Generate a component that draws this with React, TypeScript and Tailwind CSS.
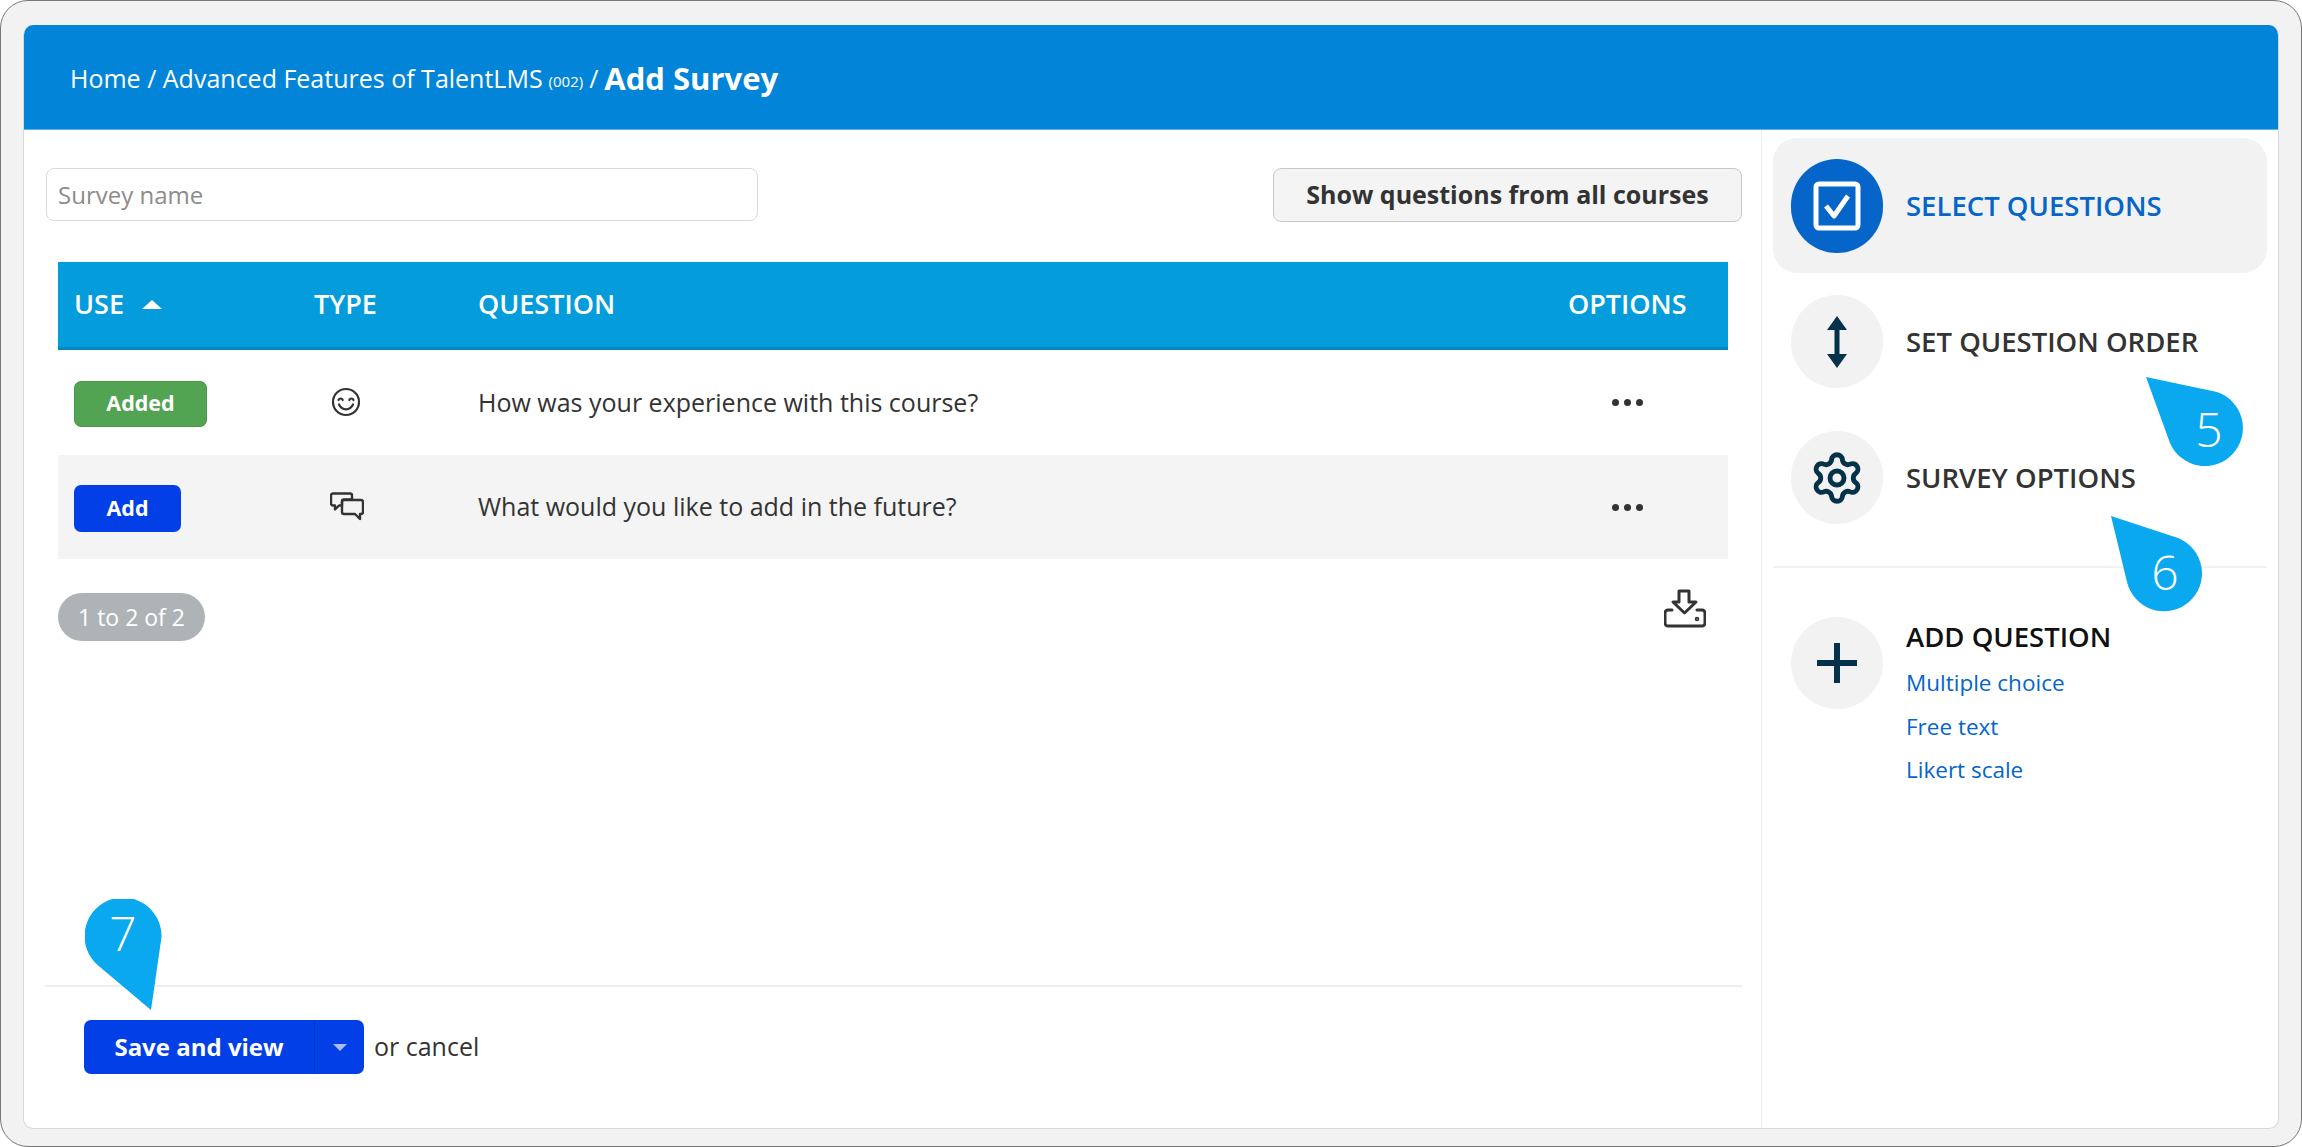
import { Settings } from 'lucide-react';

const openSans = { fontFamily: '"Open Sans", sans-serif' };

const rows = [
  { status: 'Added', icon: 'smile', question: 'How was your experience with this course?' },
  { status: 'Add', icon: 'chat', question: 'What would you like to add in the future?' },
];

function SmileIcon() {
  return (
    <svg width="30" height="30" viewBox="0 0 30 30" fill="none" stroke="#333" strokeWidth="2.2" strokeLinecap="round">
      <circle cx="15" cy="15" r="13" />
      <path d="M7.5 13c.8-2 3.400-2 4.200 0M18.300 13c.8-2 3.400-2 4.200 0" />
      <path d="M8 17.500c1.500 3.300 4 4.800 7 4.800s5.500-1.500 7-4.800" />
    </svg>
  );
}

function ChatIcon() {
  return (
    <svg width="34" height="30" viewBox="0 0 34 30" fill="none" stroke="#333" strokeWidth="2.4" strokeLinejoin="round">
      <path d="M3 1.500h17a2 2 0 0 1 2 2v4h-8a2 2 0 0 0-2 2v4H9l-4 4v-4H3a2 2 0 0 1-2-2v-8a2 2 0 0 1 2-2z" />
      <path d="M14 8h17a2 2 0 0 1 2 2v10a2 2 0 0 1-2 2h-1v5l-5-5H14a2 2 0 0 1-2-2V10a2 2 0 0 1 2-2z" />
    </svg>
  );
}

function DownloadIcon() {
  return (
    <svg width="42" height="40" viewBox="0 0 42 40" fill="none" stroke="#333" strokeWidth="3" strokeLinejoin="round" strokeLinecap="round">
      <path d="M15 2h10v11h7L20.500 24 9 13h6z" />
      <path d="M8 21H4a3 3 0 0 0-3 3v10a3 3 0 0 0 3 3h34a3 3 0 0 0 3-3V24a3 3 0 0 0-3-3h-5" />
      <circle cx="33" cy="30" r="0.800" fill="#333" />
    </svg>
  );
}

function SideIcon({ name }: { name: string }) {
  if (name === 'check') {
    return (
      <svg width="48" height="50" viewBox="0 0 48 50" fill="none" stroke="white" strokeWidth="5" strokeLinejoin="round">
        <rect x="3" y="3" width="42" height="44" rx="3" />
        <path d="M13 25l8 10 14-20" />
      </svg>
    );
  }
  if (name === 'order') {
    return (
      <svg width="24" height="54" viewBox="0 0 24 54" fill="#04324a">
        <path d="M12 1l10 14H14.500v24H22L12 53 2 39h7.500V15H2z" />
      </svg>
    );
  }
  if (name === 'gear') {
    return <Settings size={56} strokeWidth={2.1} color="#04324a" />;
  }
  return (
    <svg width="42" height="42" viewBox="0 0 42 42" fill="#04324a">
      <path d="M18 1h6v17h17v6H24v17h-6V24H1v-6h17z" />
    </svg>
  );
}

function SideRow({ icon, label, active }: { icon: string; label: string; active?: boolean }) {
  return (
    <div className={active ? 'h-[135px] flex items-center pl-[18px] gap-[23px] rounded-[24px] bg-[#f2f2f2]' : 'h-[136px] pt-[1px] flex items-center pl-[18px] gap-[23px]'}>
      <div className={active ? 'w-[92px] h-[94px] mt-[1px] rounded-full flex items-center justify-center bg-[#0565c8]' : 'w-[92px] h-[93px] rounded-full flex items-center justify-center bg-[#f2f2f2]'}>
        <SideIcon name={icon} />
      </div>
      <span className={active ? 'text-[27.5px] font-semibold text-[#0565c8]' : 'text-[27.5px] font-semibold text-[#333]'}>{label}</span>
    </div>
  );
}

export default function App() {
  return (
    <div
      className="relative box-border w-[2302px] h-[1147px] bg-[#f2f2f2] border border-[#777] rounded-[28px] pt-[24px] px-[22px] pb-[17px] overflow-hidden"
      style={openSans}
    >
      <div className="h-full flex flex-col bg-white rounded-[10px] border-x border-b border-[#cfdbe3] overflow-hidden">
        {/* Breadcrumb */}
        <header className="h-[105px] shrink-0 flex items-center pl-[46px] pt-[3px] bg-[#0284d8] border-b border-[#5bb5ec] text-white text-[25px]">
          <span>Home / Advanced Features of TalentLMS</span>
          <span className="text-[15px] ml-[6px] mt-[6px]">(002)</span>
          <span className="ml-[6px]">/</span>
          <span className="ml-[6px] text-[31px] font-bold">Add Survey</span>
        </header>

        <div className="flex-1 flex min-h-0">
          {/* Main column */}
          <main className="w-[1737px] shrink-0 flex flex-col pl-[21px] pr-[19px] pt-[38px]">
            <div className="flex justify-between items-start">
              <input
                placeholder="Survey name"
                className="ml-[1px] w-[712px] h-[53px] px-[11px] bg-white border border-[#d3dbe0] rounded-[8px] text-[24px] placeholder:text-[#8c8c8c] outline-none"
              />
              <button className="w-[469px] h-[54px] bg-[#f4f4f4] border border-[#c8c8c8] rounded-[8px] text-[25px] font-bold text-[#333]">
                Show questions from all courses
              </button>
            </div>

            <div className="mt-[40px] ml-[13px] mr-[14px]">
              <div className="h-[88px] grid grid-cols-[256px_164px_1fr_160px] items-center bg-[#059cdc] border-b-[3px] border-[#0488c0] text-white text-[27px] font-semibold">
                <div className="pl-[16px] flex items-center gap-[18px]">
                  USE
                  <span className="w-0 h-0 border-x-[10px] border-x-transparent border-b-[9px] border-b-white" />
                </div>
                <div>TYPE</div>
                <div>QUESTION</div>
                <div>OPTIONS</div>
              </div>

              {rows.map((row) => (
                <div
                  key={row.question}
                  className={
                    row.status === 'Add'
                      ? 'h-[104px] grid grid-cols-[256px_164px_1fr_160px] items-center bg-[#f4f4f4]'
                      : 'h-[105px] grid grid-cols-[256px_164px_1fr_160px] items-center bg-white'
                  }
                >
                  <div className="pl-[16px] pt-[2px]">
                    {row.status === 'Added' ? (
                      <div className="w-[133px] h-[46px] flex items-center justify-center rounded-[7px] bg-[#52a352] border border-[#4b964b] text-white text-[21.5px] font-bold">
                        Added
                      </div>
                    ) : (
                      <div className="w-[107px] h-[47px] flex items-center justify-center rounded-[7px] bg-[#023fe6] text-white text-[21.5px] font-bold">
                        Add
                      </div>
                    )}
                  </div>
                  <div className={row.icon === 'smile' ? 'pl-[17px] pb-[2px]' : 'pl-[16px] pb-[1px]'}>
                    {row.icon === 'smile' ? <SmileIcon /> : <ChatIcon />}
                  </div>
                  <div className="text-[25px] text-[#333]">{row.question}</div>
                  <div className="pl-[44px] flex gap-[5px]">
                    <span className="w-[7px] h-[7px] rounded-full bg-[#333]" />
                    <span className="w-[7px] h-[7px] rounded-full bg-[#333]" />
                    <span className="w-[7px] h-[7px] rounded-full bg-[#333]" />
                  </div>
                </div>
              ))}

              <div className="mt-[34px] flex justify-between items-start">
                <span className="w-[147px] h-[48px] flex items-center justify-center rounded-full bg-[#aeb4b6] text-white text-[23px]">
                  1 to 2 of 2
                </span>
                <span className="mr-[22px] -mt-[4px]">
                  <DownloadIcon />
                </span>
              </div>
            </div>

            {/* Footer */}
            <div className="mt-auto h-[143px] border-t-2 border-[#eeeeee] pl-[39px] pt-[33px] flex items-start gap-[10px]">
              <div className="w-[280px] h-[54px] flex rounded-[7px] bg-[#023fe6] text-white">
                <div className="w-[230px] flex items-center justify-center text-[24px] font-bold">Save and view</div>
                <div className="flex-1 flex items-center justify-center border-l border-[#0236c6]">
                  <span className="w-0 h-0 border-x-[7px] border-x-transparent border-t-[7px] border-t-[#a9bcf5]" />
                </div>
              </div>
              <span className="h-[54px] flex items-center text-[25px] text-[#333]">or cancel</span>
            </div>
          </main>

          {/* Side column */}
          <aside className="flex-1 border-l border-[#eeeeee] pl-[11px] pr-[11px] pt-[8px]">
            <SideRow icon="check" label="SELECT QUESTIONS" active />
            <SideRow icon="order" label="SET QUESTION ORDER" />
            <SideRow icon="gear" label="SURVEY OPTIONS" />
            <div className="mt-[21px] border-t-2 border-[#f2f2f2] pl-[18px] pt-[49px] flex gap-[23px]">
              <div className="w-[92px] h-[92px] rounded-full flex items-center justify-center bg-[#f2f2f2]">
                <SideIcon name="plus" />
              </div>
              <div className="flex flex-col pt-[2px]">
                <span className="text-[27.5px] font-semibold text-[#111] leading-[36px]">ADD QUESTION</span>
                <div className="mt-[12px] flex flex-col gap-[11.5px] text-[22.5px] leading-[32px] text-[#0565c8]">
                  <span>Multiple choice</span>
                  <span>Free text</span>
                  <span>Likert scale</span>
                </div>
              </div>
            </div>
          </aside>
        </div>
      </div>

      {/* Callout pins */}
      <svg className="absolute left-[2145px] top-[376px]" width="100" height="94" viewBox="0 0 100 94">
        <path d="M0 0L71 15A38 38 0 1 1 24 66Z" fill="#0aa8ee" />
        <text x="63" y="70" textAnchor="middle" fill="white" fontSize="48" fontWeight="350">5</text>
      </svg>
      <svg className="absolute left-[2110px] top-[515px]" width="94" height="98" viewBox="0 0 94 98">
        <path d="M0 0L67 22A38 38 0 1 1 16 66Z" fill="#0aa8ee" />
        <text x="54" y="74" textAnchor="middle" fill="white" fontSize="48" fontWeight="350">6</text>
      </svg>
      <svg className="absolute left-[84px] top-[898px]" width="78" height="111" viewBox="0 0 78 111">
        <path d="M66 111L76.500 38A38.500 38.500 0 1 0 12.600 66Z" fill="#0aa8ee" />
        <text x="38" y="52" textAnchor="middle" fill="white" fontSize="48" fontWeight="350">7</text>
      </svg>
    </div>
  );
}
